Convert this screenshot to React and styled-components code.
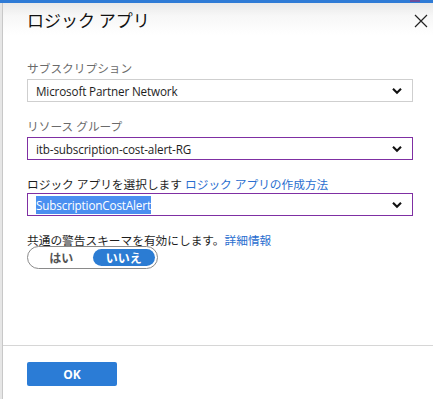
import styled, { createGlobalStyle } from 'styled-components';

const GlobalStyle = createGlobalStyle`
  html, body {
    margin: 0;
    padding: 0;
    background: #ffffff;
  }
  body {
    font-family: 'Segoe UI', 'Open Sans', 'Noto Sans CJK JP', sans-serif;
    color: #1e1e1e;
  }
`;

const fields = [
  { label: 'サブスクリプション', value: 'Microsoft Partner Network', focused: false },
  { label: 'リソース グループ', value: 'itb-subscription-cost-alert-RG', focused: true },
];

export default function App() {
  return (
    <>
      <GlobalStyle />
      <Page>
        <TopBar>
          <Avatar aria-hidden='true' />
        </TopBar>
        <Body>
          <LeftStrip aria-hidden='true' />
          <Dialog>
            <Header>
              <Title>ロジック アプリ</Title>
              <CloseButton aria-label='close'>
                <svg width='14' height='14' viewBox='0 0 14 14'>
                  <path d='M1 1 L13 13 M13 1 L1 13' stroke='#222' strokeWidth='1.2' fill='none' />
                </svg>
              </CloseButton>
            </Header>
            <Content>
              {fields.map((f) => (
                <Field key={f.label}>
                  <Label>{f.label}</Label>
                  <Select focused={f.focused}>
                    <SelectText>{f.value}</SelectText>
                    <Chevron />
                  </Select>
                </Field>
              ))}
              <Field tight>
                <Label dark>
                  ロジック アプリを選択します <Link>ロジック アプリの作成方法</Link>
                </Label>
                <Select focused>
                  <SelectText>
                    <Selected>SubscriptionCostAlert</Selected>
                  </SelectText>
                  <Chevron />
                </Select>
              </Field>
              <Field>
                <Label dark>
                  共通の警告スキーマを有効にします。<Link>詳細情報</Link>
                </Label>
                <Toggle>
                  <ToggleOption>はい</ToggleOption>
                  <ToggleOption active>いいえ</ToggleOption>
                </Toggle>
              </Field>
            </Content>
            <Footer>
              <PrimaryButton>OK</PrimaryButton>
            </Footer>
          </Dialog>
        </Body>
      </Page>
    </>
  );
}

function Chevron() {
  return (
    <ChevronIcon width='12' height='8' viewBox='0 0 12 8'>
      <path d='M2 1.8 L6 5.8 L10 1.8' stroke='#111' strokeWidth='2.1' fill='none' />
    </ChevronIcon>
  );
}

// styles
const Page = styled.div`
  width: 433px;
  height: 399px;
  display: flex;
  flex-direction: column;
  overflow: hidden;
`;
const TopBar = styled.div`
  position: relative;
  height: 3px;
  background: #2f7bd6;
  flex-shrink: 0;
`;
const Avatar = styled.div`
  position: absolute;
  right: 13px;
  top: 0;
  width: 10px;
  height: 2px;
  background: #6a4e9c;
`;
const Body = styled.div`
  flex: 1;
  display: flex;
`;
const LeftStrip = styled.div`
  width: 2px;
  background: #e6e6e6;
  border-right: 1px solid #c8c8c8;
`;
const Dialog = styled.div`
  flex: 1;
  display: flex;
  flex-direction: column;
  background: #fff;
`;
const Header = styled.div`
  display: flex;
  align-items: center;
  justify-content: space-between;
  height: 32px;
  padding: 0 5px 0 24px;
  background: linear-gradient(#e9e9e9 0%, #f7f7f7 40%, #ffffff 100%);
`;
const Title = styled.h1`
  margin: 0;
  font-family: 'Noto Sans CJK JP', sans-serif;
  font-size: 17px;
  font-weight: 400;
  color: #111;
`;
const CloseButton = styled.button`
  border: none;
  background: none;
  padding: 0;
  width: 14px;
  height: 14px;
  display: flex;
  margin-top: 4px;
`;
const Content = styled.div`
  flex: 1;
  display: flex;
  flex-direction: column;
  gap: 16px;
  padding: 25px 20px 0 24px;
`;
const Field = styled.div`
  display: flex;
  flex-direction: column;
  gap: ${({ tight }) => (tight ? '1px' : '3px')};
`;
const Label = styled.div`
  font-family: 'Segoe UI', 'Open Sans', 'Noto Sans CJK JP', sans-serif;
  font-size: 11.7px;
  line-height: 16px;
  color: ${({ dark }) => (dark ? '#1e1e1e' : '#6a6a6a')};
`;
const Link = styled.span`
  color: #2a6ecf;
`;
const Select = styled.div`
  display: flex;
  align-items: center;
  justify-content: space-between;
  height: 23px;
  box-sizing: border-box;
  padding: 0 9px 0 8px;
  border: 1px solid ${({ focused }) => (focused ? '#7f2fa3' : '#cfcfcf')};
  background: #fff;
`;
const SelectText = styled.span`
  font-family: 'Segoe UI', 'Open Sans', sans-serif;
  font-size: 11.7px;
  color: #1e1e1e;
  letter-spacing: -0.15px;
`;
const Selected = styled.span`
  background: #4a8ff0;
  color: #fff;
  padding: 1px 0;
`;
const ChevronIcon = styled.svg`
  flex-shrink: 0;
`;
const Toggle = styled.div`
  display: flex;
  align-items: center;
  width: 131px;
  height: 23px;
  box-sizing: border-box;
  padding: 2px;
  border: 1px solid #8a8a8a;
  border-radius: 12px;
  margin-top: -5px;
`;
const ToggleOption = styled.div`
  flex: 1;
  height: 100%;
  display: flex;
  align-items: center;
  justify-content: center;
  border-radius: 10px;
  font-family: 'Noto Sans CJK JP', sans-serif;
  font-size: 12px;
  font-weight: 700;
  color: ${({ active }) => (active ? '#fff' : '#555')};
  background: ${({ active }) => (active ? '#2b7cd3' : 'transparent')};
`;
const Footer = styled.div`
  border-top: 1px solid #d6d6d6;
  padding: 16px 24px 13px;
`;
const PrimaryButton = styled.button`
  width: 90px;
  height: 24px;
  border: none;
  border-radius: 2px;
  background: #2b7cd6;
  color: #fff;
  font-family: 'Segoe UI', 'Open Sans', sans-serif;
  font-size: 12px;
  font-weight: 700;
`;
